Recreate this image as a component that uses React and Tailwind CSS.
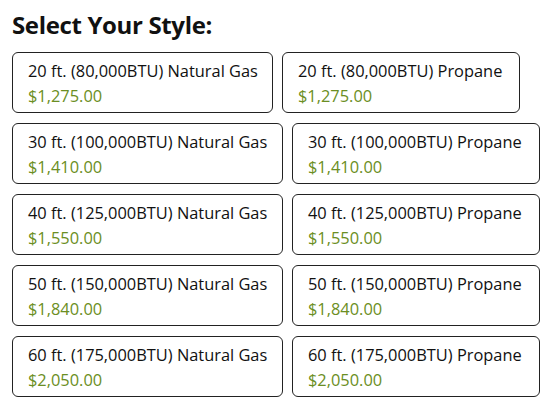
export default function App() {
  const rows = [
    ["20 ft. (80,000BTU)", "$1,275.00", "w-[261px]", "w-[238px]"],
    ["30 ft. (100,000BTU)", "$1,410.00", "w-[271px]", "w-[248px]"],
    ["40 ft. (125,000BTU)", "$1,550.00", "w-[271px]", "w-[248px]"],
    ["50 ft. (150,000BTU)", "$1,840.00", "w-[271px]", "w-[248px]"],
    ["60 ft. (175,000BTU)", "$2,050.00", "w-[271px]", "w-[248px]"],
  ];
  return (
    <div className="w-[558px] h-[406px] bg-white text-[#111] px-[12px] pt-[10px]" style={{ fontFamily: '"Open Sans", sans-serif' }}>
      <h2 className="text-[24px] font-bold leading-[30px] tracking-[-0.35px] mb-[12px]">Select Your Style:</h2>
      <div className="flex flex-col gap-[10px]">
        {rows.map(([name, price, w1, w2], i) => (
          <div key={i} className="flex gap-[9px]">
            {[["Natural Gas", w1], ["Propane", w2]].map(([fuel, w]) => (
              <div key={fuel} className={`${w} border border-[#222] rounded-[6px] pl-[15px] pt-[5px] pb-[4px] whitespace-nowrap`}>
                <div className="text-[16.4px] leading-[25px]">{name} {fuel}</div>
                <div className="text-[16.4px] leading-[25px] text-[#6b8e23]">{price}</div>
              </div>
            ))}
          </div>
        ))}
      </div>
    </div>
  );
}
